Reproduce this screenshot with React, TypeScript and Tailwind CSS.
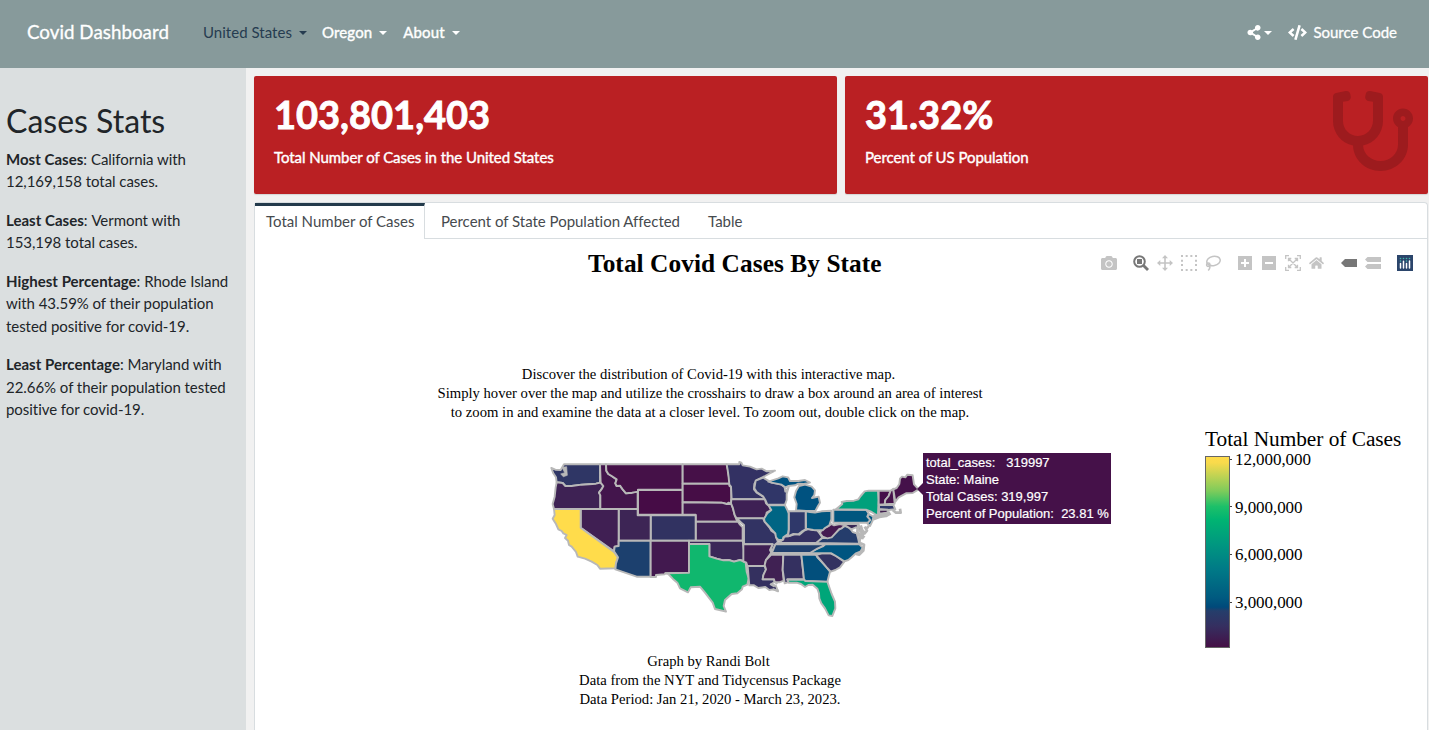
import React from "react";
import { FaCamera, FaCode, FaHome, FaShareAlt, FaStethoscope } from "react-icons/fa";

type Shape = { id: string; fill: string; d: string };

const west: Shape[] = [
  { id: "WA", fill: "#2f3665", d: "M34,54 L46,59 62,60 72,43 H180 V98 L168,101 125,104 95,108 76,108 68,99 50,97 48,82 40,70z" },
  { id: "OR", fill: "#3e2254", d: "M50,97 L68,99 76,108 95,108 125,104 168,101 182,98 190,108 186,116 177,128 181,136 V177 H42 L38,162 44,140 47,112z" },
  { id: "ID", fill: "#43154c", d: "M180,43 H198 L199,62 205,72 215,78 230,88 226,100 230,108 240,107 248,118 258,130 276,128 293,125 V177 H181 V136 L177,128 186,116 190,108 182,98z" },
  { id: "MT", fill: "#451148", d: "M198,43 H428 V119 H294 V125 L276,128 258,130 248,118 240,107 230,108 226,100 230,88 215,78 205,72 199,62z" },
  { id: "WY", fill: "#460c46", d: "M294,120 H428 V194 H294z" },
  { id: "ND", fill: "#461048", d: "M428,43 H560 L564,60 567,82 571,101 H428z" },
  { id: "SD", fill: "#460d46", d: "M428,101 H571 L568,107 574,112 V162 L566,158 560,162 545,158 428,157z" },
  { id: "NE", fill: "#43184e", d: "M428,157 L545,158 560,162 574,162 580,178 584,195 592,215 H467 V194 H428z" },
  { id: "KS", fill: "#3e2154", d: "M467,215 H594 L600,224 608,232 V272 H467z" },
  { id: "CO", fill: "#313261", d: "M332,196 H467 V272 H332z" },
  { id: "UT", fill: "#3d2555", d: "M236,177 H293 V196 H332 V272 H236z" },
  { id: "NV", fill: "#401f53", d: "M122,177 H236 V288 L224,290 222,304 122,233z" },
  { id: "CA", fill: "#ffdc4b", d: "M42,177 H122 V233 L222,306 234,322 228,340 226,355 180,356 172,345 155,335 135,326 113,320 108,306 95,290 87,285 84,272 75,264 80,255 70,250 65,243 55,238 48,222 38,206 44,195z" },
  { id: "AZ", fill: "#1c406e", d: "M236,272 H332 V380 H290 L226,358 228,340 234,322 222,304 224,290 236,288z" },
  { id: "NM", fill: "#42194f", d: "M332,272 H447 V368 L376,370 374,373 348,375 V381 H332z" },
  { id: "OK", fill: "#3b2858", d: "M447,272 H608 L612,300 V332 L600,330 582,335 566,330 550,331 530,326 508,319 V282 H447z" },
  { id: "TX", fill: "#10b76e", d: "M447,282 H508 V319 L530,326 550,331 566,330 582,335 600,330 617,338 620,365 626,385 622,404 608,410 606,418 592,430 575,432 555,450 551,468 558,485 538,480 525,477 518,458 495,428 480,410 452,412 444,427 420,415 412,398 398,386 385,372 376,370 447,368z" },
];

const east: Shape[] = [
  { id: "MN", fill: "#333163", d: "M-10,43 H28 V36 L34,38 38,46 60,50 80,58 95,56 110,64 135,62 105,78 80,90 73,102 72,118 80,128 100,140 105,148 H5 L3,110 -2,104 -4,82 -7,60z" },
  { id: "IA", fill: "#3e2054", d: "M4,148 H105 L108,160 118,166 123,180 110,188 108,200 102,206 H20 L14,195 8,172 3,160z" },
  { id: "MO", fill: "#323363", d: "M20,205 H99 L104,215 118,232 124,242 136,250 140,266 144,276 136,285 128,300 120,300 128,283 H42 V225 L34,218z" },
  { id: "AR", fill: "#3f2053", d: "M40,283 H128 L120,300 124,308 108,330 104,348 H52 L49,338 40,334z" },
  { id: "LA", fill: "#34305f", d: "M53,348 H104 L108,360 100,378 98,388 H132 L134,396 124,402 138,408 144,424 130,418 118,420 106,411 85,414 72,406 58,406 56,385z" },
  { id: "MS", fill: "#402153", d: "M124,314 H160 L158,360 161,392 148,397 134,396 132,388 H98 L100,375 108,358 104,345 108,330z" },
  { id: "AL", fill: "#343060", d: "M160,314 H214 L218,350 222,388 H172 L176,396 164,400 158,360z" },
  { id: "GA", fill: "#024f7c", d: "M214,314 H260 L262,322 276,336 290,352 300,365 296,380 292,396 226,393 222,388 218,350z" },
  { id: "FL", fill: "#00a679", d: "M172,389 H222 L226,393 292,395 298,412 305,432 315,455 316,475 307,498 296,496 285,475 274,460 268,445 267,430 262,416 248,404 235,405 225,411 213,402 200,398 176,398z" },
  { id: "SC", fill: "#333261", d: "M258,315 L275,310 302,310 318,318 343,335 330,352 316,360 302,365 290,352 276,336z" },
  { id: "NC", fill: "#005580", d: "M285,283 H388 L398,293 392,304 378,310 365,322 355,330 343,334 318,318 304,310 H236 L245,302 262,296z" },
  { id: "TN", fill: "#20406e", d: "M136,283 H285 L280,288 262,296 240,309 H125 L130,298z" },
  { id: "KY", fill: "#343062", d: "M146,279 L160,268 162,260 178,258 195,252 208,254 222,242 235,237 250,240 262,241 270,252 277,262 262,278z" },
  { id: "VA", fill: "#253d6c", d: "M258,279 L277,264 292,264 308,256 325,240 345,228 358,232 368,246 380,250 384,264 388,281z" },
  { id: "WV", fill: "#441a50", d: "M270,250 L275,238 292,230 304,222 312,226 330,222 345,226 335,235 328,237 316,250 305,262 292,265 278,260z" },
  { id: "MD", fill: "#382955", d: "M338,222 H385 L392,240 402,244 398,252 388,242 378,232 364,238 350,229z" },
  { id: "OH", fill: "#00557f", d: "M227,184 L240,186 255,188 275,184 304,182 V208 L298,226 285,234 278,241 264,241 250,240 228,236z" },
  { id: "IN", fill: "#2f386a", d: "M176,184 H227 V238 L215,245 205,253 190,252 174,259 176,240z" },
  { id: "IL", fill: "#006584", d: "M115,166 H165 L172,180 176,190 V238 L174,252 160,262 158,270 145,270 138,262 136,250 126,240 118,230 104,215 102,206 112,190 124,180z" },
  { id: "WI", fill: "#303668", d: "M77,92 L100,83 108,88 125,98 155,104 164,112 166,125 176,112 170,132 170,150 165,164 H112 L106,150 100,140 80,126 73,115z" },
  { id: "MIU", fill: "#005280", d: "M115,95 L145,85 158,79 174,82 180,93 205,93 225,90 240,98 222,102 205,101 195,106 176,108 166,112 155,104 125,98z" },
  { id: "MIL", fill: "#005280", d: "M198,181 L200,162 193,142 198,123 207,108 225,104 245,110 255,121 253,135 246,144 266,140 270,158 264,168 256,183 228,183z" },
  { id: "PA", fill: "#00567f", d: "M310,179 H408 L416,190 412,200 422,210 415,218 H310z" },
  { id: "NY", fill: "#00a07b", d: "M318,178 L337,162 335,156 350,153 372,152 385,148 392,138 404,124 416,122 H444 L446,150 444,190 450,197 436,193 425,186 408,179z" },
  { id: "VT", fill: "#45104a", d: "M446,122 H482 L476,138 466,150 464,163 446,164z" },
  { id: "NH", fill: "#46124b", d: "M482,122 L490,116 492,140 494,161 464,163 466,150 476,138z" },
  { id: "ME", fill: "#45114a", d: "M490,118 L500,114 508,102 510,86 516,80 526,82 532,74 548,76 552,103 566,118 548,129 528,130 506,142 496,155z" },
  { id: "MA", fill: "#2e3869", d: "M447,165 H490 L496,178 475,180 447,177z" },
  { id: "CT", fill: "#41224f", d: "M447,179 H474 L472,188 448,191z" },
  { id: "NJ", fill: "#005580", d: "M416,192 L430,200 428,212 420,228 412,220 421,210 413,200z" },
];

function StateMap() {
  return (
    <svg className="block" width="400" height="175" viewBox="0 0 1200 525">
      <g stroke="#b8b8b8" strokeWidth="5.8" strokeLinejoin="round">
        {west.map((s) => <path key={s.id} d={s.d} fill={s.fill} />)}
        <path d="M66,52 L80,50 82,76 70,80 62,72 74,68z" fill="#b8b8b8" strokeWidth="2" />
        <g transform="translate(570 0)">
          {east.map((s) => <path key={s.id} d={s.d} fill={s.fill} />)}
          <g fill="none">
            <path d="M385,222 L382,244 390,262 388,278 M392,226 L400,250 396,268 M404,230 L411,242 402,252 M386,250 L404,262 M416,228 L408,238" strokeWidth="8" />
            <path d="M388,278 L402,284 400,302 388,314 378,312" strokeWidth="8" />
            <path d="M430,208 L448,201 468,198 482,190 M430,199 L455,194 480,188 M488,180 L498,188 512,188 510,176" strokeWidth="8" />
            <path d="M120,402 L134,410 M128,418 L146,422 M134,396 L142,402" strokeWidth="6" />
          </g>
        </g>
      </g>
    </svg>
  );
}

function Caret() {
  return <span className="inline-block border-x-[4.5px] border-t-[4.5px] border-x-transparent border-t-current" />;
}

function MenuLink({ label, className }: { label: string; className: string }) {
  return (
    <a className={`flex items-center gap-[7px] ${className}`}>
      {label}
      <Caret />
    </a>
  );
}

function ValueBox({ value, label, children }: { value: string; label: string; children?: React.ReactNode }) {
  return (
    <div className="flex h-[118px] flex-1 justify-between rounded-[2px] bg-[#ba2023] pl-5 pr-[15px] text-white shadow-[0_1px_1px_rgba(0,0,0,0.12)]">
      <div className="pt-[10px]">
        <div className="text-[38px] font-bold leading-[57px] [-webkit-text-stroke:0.9px_white]">{value}</div>
        <p className="mt-[3px] text-[15px] leading-[22.5px] tracking-[-0.06px] [-webkit-text-stroke:0.4px_white]">{label}</p>
      </div>
      {children}
    </div>
  );
}

function Stat({ term, children }: { term: string; children: React.ReactNode }) {
  return (
    <p className="mb-4 text-[15px] leading-[22.5px]">
      <b className="tracking-[0.02px]">{term}</b>: <span className="tracking-[-0.05px]">{children}</span>
    </p>
  );
}

function Modebar() {
  return (
    <div className="ml-auto flex items-center pr-[14px] text-[#c4c4c4]">
      <FaCamera className="mr-4 h-4 w-4" />
      <div className="mr-4 flex gap-2">
        <svg width="16" height="16" viewBox="0 0 16 16" fill="none" stroke="#777" strokeWidth="2">
          <circle cx="6.5" cy="6.5" r="5.3" /><path d="M10.5,10.5 L15,15" strokeWidth="2.8" /><path d="M4,4 H9 V9 H4z" fill="#777" stroke="none" />
        </svg>
        <svg width="16" height="16" viewBox="0 0 16 16" fill="currentColor">
          <path d="M8,0 L11,3.3 H8.8 V7.2 H12.7 V5 L16,8 12.7,11 V8.8 H8.8 V12.7 H11 L8,16 5,12.7 H7.2 V8.8 H3.3 V11 L0,8 3.3,5 V7.2 H7.2 V3.3 H5z" />
        </svg>
        <svg width="16" height="16" viewBox="0 0 16 16" fill="none" stroke="currentColor" strokeWidth="2">
          <path d="M0,1 H16 M0,15 H16" strokeDasharray="2 2.67" /><path d="M1,4.7 V12 M15,4.7 V12" strokeDasharray="2 2.3" />
        </svg>
        <svg width="16" height="16" viewBox="0 0 16 16" fill="none" stroke="currentColor" strokeWidth="1.5">
          <ellipse cx="8.5" cy="6" rx="6.8" ry="4.6" transform="rotate(-12 8.5 6)" /><circle cx="3.3" cy="9.8" r="1.7" /><path d="M4,10 C6,12 4.5,14 3.2,15.5" />
        </svg>
      </div>
      <div className="mr-4 flex gap-2">
        <svg width="16" height="16" viewBox="0 0 16 16"><path d="M1,1 H15 V15 H1z" fill="currentColor" /><path d="M8,4 V12 M4,8 H12" stroke="white" strokeWidth="2" /></svg>
        <svg width="16" height="16" viewBox="0 0 16 16"><path d="M1,1 H15 V15 H1z" fill="currentColor" /><path d="M4,8 H12" stroke="white" strokeWidth="2" /></svg>
        <svg width="16" height="16" viewBox="0 0 16 16" fill="none" stroke="currentColor" strokeWidth="1.3">
          <path d="M.7,4 V.7 H4 M12,.7 H15.3 V4 M15.3,12 V15.3 H12 M4,15.3 H.7 V12 M4,4 L12,12 M12,4 L4,12 M3.5,6.3 V3.5 H6.3 M9.7,3.5 H12.5 V6.3 M12.5,9.7 V12.5 H9.7 M6.3,12.5 H3.5 V9.7" />
        </svg>
        <FaHome className="h-4 w-[15px]" />
      </div>
      <div className="mr-4 flex gap-2 pl-px">
        <svg width="16" height="16" viewBox="0 0 16 16" fill="#777"><path d="M0,8 L4,4 H16 V12 H4z" /></svg>
        <svg width="16" height="16" viewBox="0 0 16 16" fill="currentColor"><path d="M0,4.5 L2.5,2 H16 V7 H2.5z M0,11.5 L2.5,9 H16 V14 H2.5z" /></svg>
      </div>
      <svg width="16" height="16" viewBox="0 0 16 16">
        <path d="M0,0 H16 V16 H0z" fill="#2b456b" />
        <path d="M3.5,8.5 V13 M6.5,6.3 V13 M9.5,8.5 V13 M12.5,6 V13" stroke="white" strokeWidth="1.5" strokeLinecap="round" />
        <path d="M3.5,3.5 h.01 M6.5,3.5 h.01 M9.5,3.5 h.01 M12.5,3.5 h.01 M3.5,6 h.01 M9.5,6 h.01" stroke="#45b5ac" strokeWidth="1.6" strokeLinecap="round" />
      </svg>
    </div>
  );
}

const ticks = ["12,000,000", "9,000,000", "6,000,000", "3,000,000"];

function ColorScale() {
  return (
    <div className="pt-[140px] font-['Liberation_Serif',serif] text-black">
      <div className="whitespace-nowrap text-[21.33px] leading-6 tracking-[-0.03px]">Total Number of Cases</div>
      <div className="mt-[5px] flex">
        <div className="h-[192px] w-[25px] border border-[#666] bg-[linear-gradient(to_bottom,#ffdc4b_0%,#f9da4c_3%,#7dcb5b_18%,#1dc069_26%,#00b472_33%,#009780_46%,#007a87_59%,#005a80_74%,#00497a_79%,#253e6b_81%,#352f60_89%,#451046_100%)]" />
        <div className="-mt-[7px] flex flex-col">
          {ticks.map((t) => (
            <div key={t} className="flex h-[47.7px] items-start gap-[3px] text-[17px] leading-[22px] tracking-[-0.06px]">
              <span className="mt-[9.5px] h-px w-[2px] bg-[#444]" />
              {t}
            </div>
          ))}
        </div>
      </div>
    </div>
  );
}

function Tooltip() {
  return (
    <div className="absolute left-[662px] top-[214px] flex items-center font-['Liberation_Sans',Arial,sans-serif] text-[13px] leading-[17px] text-white">
      <div className="h-0 w-0 border-y-[6px] border-r-[6px] border-y-transparent border-r-[#451149]" />
      <div className="h-[71px] w-[188px] whitespace-pre bg-[#451149] pl-[3px] pt-px [-webkit-text-stroke:0.2px_white]">
        <div>total_cases:   319997</div>
        <div>State: Maine</div>
        <div>Total Cases: 319,997</div>
        <div>Percent of Population:  23.81 %</div>
      </div>
    </div>
  );
}

export default function App() {
  return (
    <div className="flex h-[730px] w-[1429px] flex-col overflow-hidden bg-[#f1f1f1] font-[Lato,sans-serif] text-[15px] text-[#212529] [font-variant-ligatures:none]">
      <header className="flex h-[68px] shrink-0 items-center bg-[#879a9b] pb-[3px] pl-[27px] pr-8 text-white">
        <div className="w-[176px] text-[18.75px] tracking-[0.03px] [-webkit-text-stroke:0.3px_white]">Covid Dashboard</div>
        <nav className="flex gap-[15px]">
          <MenuLink label="United States" className="tracking-[0.03px] text-[#263c50]" />
          <MenuLink label="Oregon" className="tracking-[0.15px] [-webkit-text-stroke:0.4px_white]" />
          <MenuLink label="About" className="pl-px tracking-[0.1px] [-webkit-text-stroke:0.4px_white]" />
        </nav>
        <div className="ml-auto flex items-center gap-4">
          <a className="flex items-center gap-[3px]"><FaShareAlt className="h-[15px] w-[14px]" /><Caret /></a>
          <a className="flex items-center gap-[6px] [-webkit-text-stroke:0.3px_white]"><FaCode className="h-[15px] w-[19px]" />Source Code</a>
        </div>
      </header>
      <div className="flex min-h-0 flex-1">
        <aside className="w-[246px] shrink-0 bg-[#dbdfe0] px-[6px] pt-[34px]">
          <h2 className="mb-[7.5px] text-[32px] leading-[38px]">Cases Stats</h2>
          <Stat term="Most Cases">California with<br />12,169,158 total cases.</Stat>
          <Stat term="Least Cases">Vermont with<br />153,198 total cases.</Stat>
          <Stat term="Highest Percentage">Rhode Island<br />with 43.59% of their population<br />tested positive for covid-19.</Stat>
          <Stat term="Least Percentage">Maryland with<br />22.66% of their population tested<br />positive for covid-19.</Stat>
        </aside>
        <main className="flex min-w-0 flex-1 flex-col gap-2 pl-2 pr-px pt-2">
          <div className="flex gap-2">
            <ValueBox value="103,801,403" label="Total Number of Cases in the United States" />
            <ValueBox value="31.32%" label="Percent of US Population">
              <FaStethoscope className="mt-[15px] h-20 w-20 text-[#9d1b1e]" />
            </ValueBox>
          </div>
          <section className="flex min-h-0 flex-1 flex-col rounded-t-[4px] border border-b-0 border-[#d8dde0] bg-white">
            <div className="flex h-9 shrink-0 text-[#464a4e]">
              <div className="w-[170px] border-r border-t-[3px] border-r-[#d8dde0] border-t-[#233a4b] pl-[11px] leading-[31px]">Total Number of Cases</div>
              <div className="flex flex-1 gap-[27px] border-b border-[#d8dde0] pl-4 leading-[37px]">
                <span className="w-[240px] whitespace-nowrap tracking-[-0.02px]">Percent of State Population Affected</span>
                <span>Table</span>
              </div>
            </div>
            <div className="relative flex-1">
              <div className="flex h-12 items-center pl-[333px]">
                <h1 className="whitespace-nowrap pt-[2px] font-['Liberation_Serif',serif] text-[25.33px] font-bold tracking-[0.07px] text-black">Total Covid Cases By State</h1>
                <Modebar />
              </div>
              <div className="flex">
                <div className="flex w-[910px] flex-col items-center font-['Liberation_Serif',serif] text-[14.67px] leading-[19px] text-black">
                  <p className="pt-[78px] text-center">
                    <span className="pr-[3px]">Discover the distribution of Covid-19 with this interactive map.</span><br />
                    Simply hover over the map and utilize the crosshairs to draw a box around an area of interest<br />
                    to zoom in and examine the data at a closer level. To zoom out, double click on the map.
                  </p>
                  <div className="mt-[28px] w-[340px]"><StateMap /></div>
                  <p className="mt-[27px] text-center">
                    <span className="pr-[3px]">Graph by Randi Bolt</span><br />
                    Data from the NYT and Tidycensus Package<br />
                    Data Period: Jan 21, 2020 - March 23, 2023.
                  </p>
                </div>
                <div className="ml-10"><ColorScale /></div>
              </div>
              <Tooltip />
            </div>
          </section>
        </main>
      </div>
    </div>
  );
}
